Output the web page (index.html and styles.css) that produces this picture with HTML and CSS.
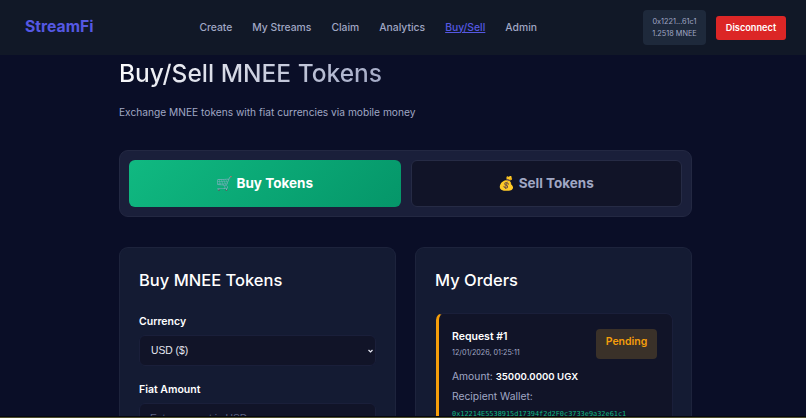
FILE: index.html
```html
<!DOCTYPE html>
<html lang="en">
<head>
    <meta charset="UTF-8">
    <title>StreamFi - Buy/Sell</title>
    <link rel="stylesheet" href="styles.css">
</head>
<body>
    <nav class="navbar">
        <div class="logo">StreamFi</div>
        <div class="nav-links">
            <a href="#">Create</a>
            <a href="#">My Streams</a>
            <a href="#">Claim</a>
            <a href="#">Analytics</a>
            <a href="#" class="active">Buy/Sell</a>
            <a href="#">Admin</a>
        </div>
        <div class="wallet">
            <div class="wallet-info">
                <span>0x1221...61c1</span>
                <span>1.2518 MNEE</span>
            </div>
            <button class="disconnect">Disconnect</button>
        </div>
    </nav>
    <main class="page">
        <h1>Buy/Sell MNEE Tokens</h1>
        <p class="subtitle">Exchange MNEE tokens with fiat currencies via mobile money</p>
        <div class="tabs">
            <button class="tab tab-active">🛒 Buy Tokens</button>
            <button class="tab">💰 Sell Tokens</button>
        </div>
        <div class="columns">
            <section class="card">
                <h2>Buy MNEE Tokens</h2>
                <label>Currency</label>
                <select class="field field-select">
                    <option>USD ($)</option>
                </select>
                <label>Fiat Amount</label>
                <input class="field" type="text" placeholder="Enter amount in USD">
            </section>
            <section class="card">
                <h2>My Orders</h2>
                <div class="order">
                    <div class="order-top">
                        <div>
                            <div class="order-title">Request #1</div>
                            <div class="order-date">12/01/2026, 01:25:11</div>
                        </div>
                        <span class="badge">Pending</span>
                    </div>
                    <p class="order-line">Amount: <strong>35000.0000 UGX</strong></p>
                    <p class="order-line order-wallet">Recipient Wallet:</p>
                    <code class="addr">0x12214E5538915d17394f2d2F0c3733e9a32e61c1</code>
                </div>
            </section>
        </div>
    </main>
    <div class="edge"></div>
</body>
</html>
```
FILE: styles.css
```css
* {
    box-sizing: border-box;
}
body {
    margin: 0;
    height: 418px;
    overflow: hidden;
    font-family: "Inter", "Noto Color Emoji", sans-serif;
    background: #0a0e27;
    color: #fff;
}
.navbar {
    height: 55px;
    padding: 0 20px 0 25px;
    display: flex;
    align-items: center;
    justify-content: space-between;
    background: #111827;
}
.logo {
    margin-bottom: 2px;
    font-size: 15.7px;
    font-weight: 700;
    color: #5558e3;
}
.nav-links {
    display: flex;
    gap: 20px;
    margin-bottom: 2px;
}
.nav-links a {
    font-size: 10.35px;
    font-weight: 500;
    color: #a0a7c4;
    text-decoration: none;
}
.nav-links a.active {
    color: #5558e3;
    text-decoration: underline;
}
.wallet {
    display: flex;
    align-items: center;
    gap: 10px;
}
.wallet-info {
    width: 63px;
    height: 35px;
    display: flex;
    flex-direction: column;
    align-items: center;
    justify-content: center;
    gap: 3px;
    font-size: 7.3px;
    color: #a0a7c4;
    background: #1e293b;
    border-radius: 4px;
}
.disconnect {
    width: 70px;
    height: 24px;
    padding: 0;
    font-family: inherit;
    font-size: 9.2px;
    font-weight: 600;
    color: #fff;
    background: #dc2626;
    border: none;
    border-radius: 3px;
}
.page {
    width: 573px;
    margin-left: 119px;
}
h1 {
    display: inline-block;
    margin: 3px 0 0;
    font-size: 24.5px;
    line-height: 30px;
    font-weight: 500;
    background: linear-gradient(135deg, #fff, #a0a7c4);
    -webkit-background-clip: text;
    background-clip: text;
    color: transparent;
    vertical-align: top;
}
.subtitle {
    margin: 16px 0 0;
    font-size: 10.2px;
    line-height: 16px;
    color: #a0a7c4;
}
.tabs {
    margin-top: 30px;
    padding: 9px;
    height: 67px;
    display: grid;
    grid-template-columns: 1fr 1fr;
    gap: 10px;
    background: #1a1f3a;
    border: 1px solid #232842;
    border-radius: 9px;
}
.tab {
    padding: 0 0 2px;
    font-family: inherit;
    font-size: 13.5px;
    font-weight: 700;
    color: #a0a7c4;
    background: #111428;
    border: 1px solid #262b45;
    border-radius: 6px;
}
.tab-active {
    color: #fff;
    background: linear-gradient(135deg, #10b981, #059669);
    border: none;
}
.columns {
    margin-top: 30px;
    display: grid;
    grid-template-columns: 277px 277px;
    gap: 19px;
}
.card {
    height: 171px;
    overflow: hidden;
    padding: 19px 19px;
    background: #141b33;
    border: 1px solid #1d233c;
    border-radius: 9px 9px 0 0;
    border-bottom: none;
}
h2 {
    margin: 0 0 22px;
    font-size: 16.5px;
    line-height: 26px;
    font-weight: 500;
}
label {
    display: block;
    margin-bottom: 6px;
    font-size: 10.5px;
    line-height: 14px;
    font-weight: 600;
}
.field {
    display: block;
    width: 237px;
    height: 31px;
    margin-bottom: 17px;
    padding: 0 10px;
    font-family: "Liberation Sans", sans-serif;
    font-size: 10.3px;
    color: #e6e8f2;
    background: #111428;
    border: 1px solid #1a1f3a;
    border-radius: 6px;
}
.field-select {
    padding-left: 11px;
    appearance: none;
    background-image: url("data:image/svg+xml,%3Csvg xmlns='http://www.w3.org/2000/svg' width='5' height='4'%3E%3Cpath d='M.5 1l2 2 2-2' fill='none' stroke='%23e6e8f2' stroke-width='1.2'/%3E%3C/svg%3E");
    background-repeat: no-repeat;
    background-position: right 2px center;
}
.field::placeholder {
    color: #5b6180;
}
.order {
    height: 200px;
    margin: -2px -1px 0 1px;
    padding: 15px 15px 0 13px;
    background: #111428;
    border: 1px solid #1a1f3a;
    border-left: 3px solid #f59e0b;
    border-radius: 7px;
}
.order-top {
    display: flex;
    justify-content: space-between;
    align-items: flex-start;
}
.order-title {
    margin-top: 1px;
    font-size: 10.5px;
    font-weight: 600;
    line-height: 14px;
}
.order-date {
    margin-top: 4px;
    font-size: 7.2px;
    color: #a0a7c4;
}
.badge {
    width: 61px;
    height: 30px;
    line-height: 25px;
    text-align: center;
    font-size: 10.5px;
    font-weight: 600;
    color: #f59e0b;
    background: #3a3129;
    border-radius: 4px;
}
.order-line {
    margin: 10px 0 0;
    font-size: 10.3px;
    line-height: 15px;
    color: #a0a7c4;
}
.order-line strong {
    font-size: 9.6px;
    color: #fff;
    font-weight: 600;
}
.order-wallet {
    margin-top: 5px;
}
.addr {
    display: block;
    margin-top: 6px;
    font-family: "DejaVu Sans Mono", monospace;
    font-size: 6.9px;
    color: #10b981;
}
.edge {
    position: absolute;
    left: 0;
    right: 0;
    top: 416px;
    height: 2px;
    background: #4f4f2e;
    border-top: 1px solid #05060f;
}
```
